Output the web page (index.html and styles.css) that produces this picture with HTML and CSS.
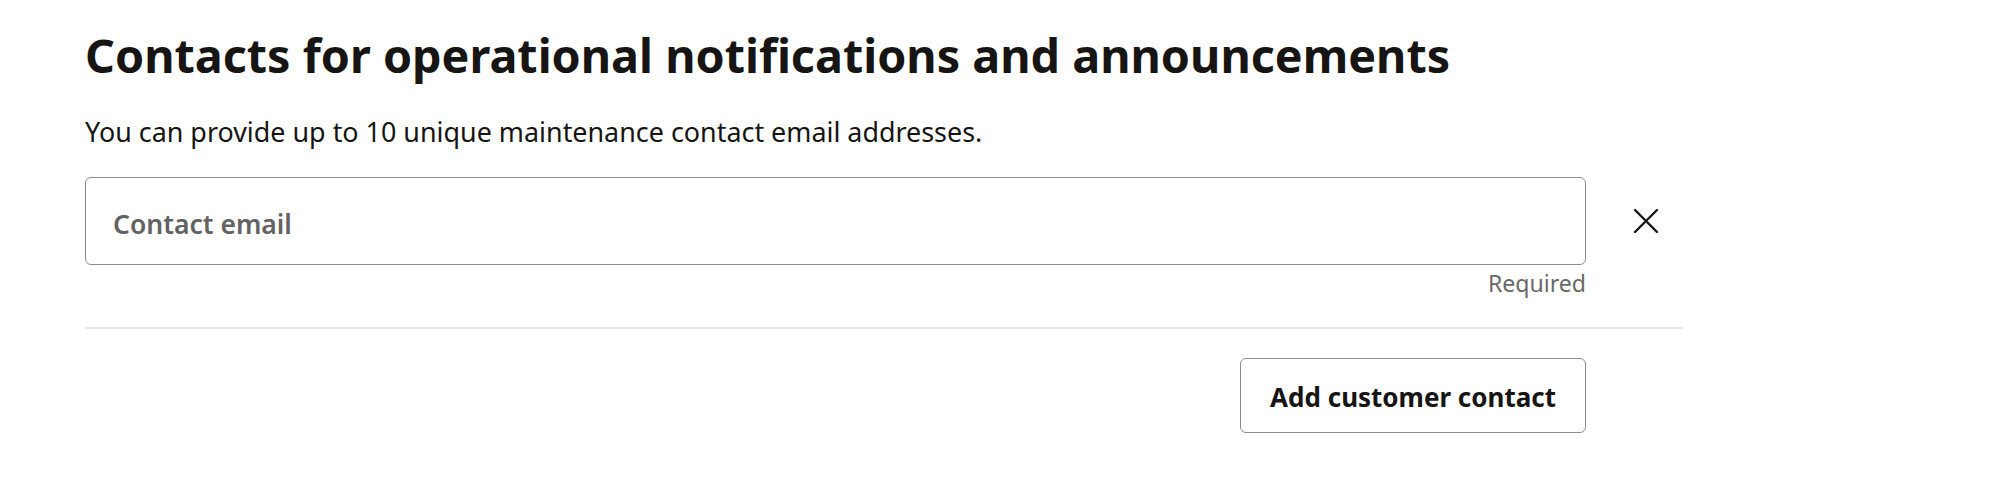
FILE: index.html
```html
<!DOCTYPE html>
<html lang="en">
<head>
<meta charset="utf-8">
<title>Contacts for operational notifications and announcements</title>
<link rel="stylesheet" href="styles.css">
</head>
<body>
<main class="page">
  <h1 class="title">Contacts for operational notifications and announcements</h1>
  <p class="desc">You can provide up to 10 unique maintenance contact email addresses.</p>
  <div class="field-row">
    <div class="field">
      <input class="email" type="email" placeholder="Contact email" aria-label="Contact email">
      <div class="hint">Required</div>
    </div>
    <button class="remove" type="button" aria-label="Remove contact">
      <svg width="26" height="26" viewBox="0 0 26 26" fill="none" stroke="#161513" stroke-width="2.4" stroke-linecap="round">
        <path d="M2 2 L24 24 M24 2 L2 24"/>
      </svg>
    </button>
  </div>
  <div class="divider"></div>
  <div class="actions">
    <button class="add" type="button">Add customer contact</button>
  </div>
</main>
</body>
</html>
```
FILE: styles.css
```css
html, body {
  margin: 0;
  padding: 0;
  background: #ffffff;
}
body {
  font-family: "Noto Sans", "Open Sans", sans-serif;
  color: #161513;
}
.page {
  width: 1598px;
  padding: 27px 0 0 85px;
}
.title {
  margin: 0;
  font-size: 46.7px;
  line-height: 56px;
  font-weight: 700;
  color: #161513;
}
.desc {
  margin: 30.5px 0 0;
  font-size: 26.9px;
  line-height: 36px;
  font-weight: 400;
  color: #161513;
}
.field-row {
  display: flex;
  align-items: flex-start;
  margin-top: 27.5px;
}
.field {
  width: 1501px;
  display: flex;
  flex-direction: column;
}
.email {
  box-sizing: border-box;
  width: 100%;
  height: 88px;
  margin: 0;
  padding: 5px 26px 0 27px;
  border: 1px solid #8b8b8b;
  border-radius: 6px;
  background: #fff;
  font-family: inherit;
  font-size: 26.5px;
  font-weight: 600;
  color: #161513;
  outline: none;
}
.email::placeholder {
  color: #636262;
  opacity: 1;
}
.hint {
  margin-top: 2px;
  text-align: right;
  font-size: 23.1px;
  line-height: 32px;
  color: #6a6969;
}
.remove {
  width: 48px;
  height: 48px;
  margin: 20px 0 0 36px;
  padding: 0;
  border: none;
  background: transparent;
  display: flex;
  align-items: center;
  justify-content: center;
  cursor: pointer;
}
.divider {
  height: 2px;
  margin-top: 28px;
  background: #e6e6e6;
}
.actions {
  display: flex;
  justify-content: flex-end;
  padding-right: 97px;
  margin-top: 29px;
}
.add {
  box-sizing: border-box;
  height: 75px;
  padding: 3px 29px 0;
  border: 1px solid #8b8b8b;
  border-radius: 6px;
  background: #fff;
  font-family: inherit;
  font-size: 26px;
  font-weight: 700;
  color: #161513;
  cursor: pointer;
}
```
